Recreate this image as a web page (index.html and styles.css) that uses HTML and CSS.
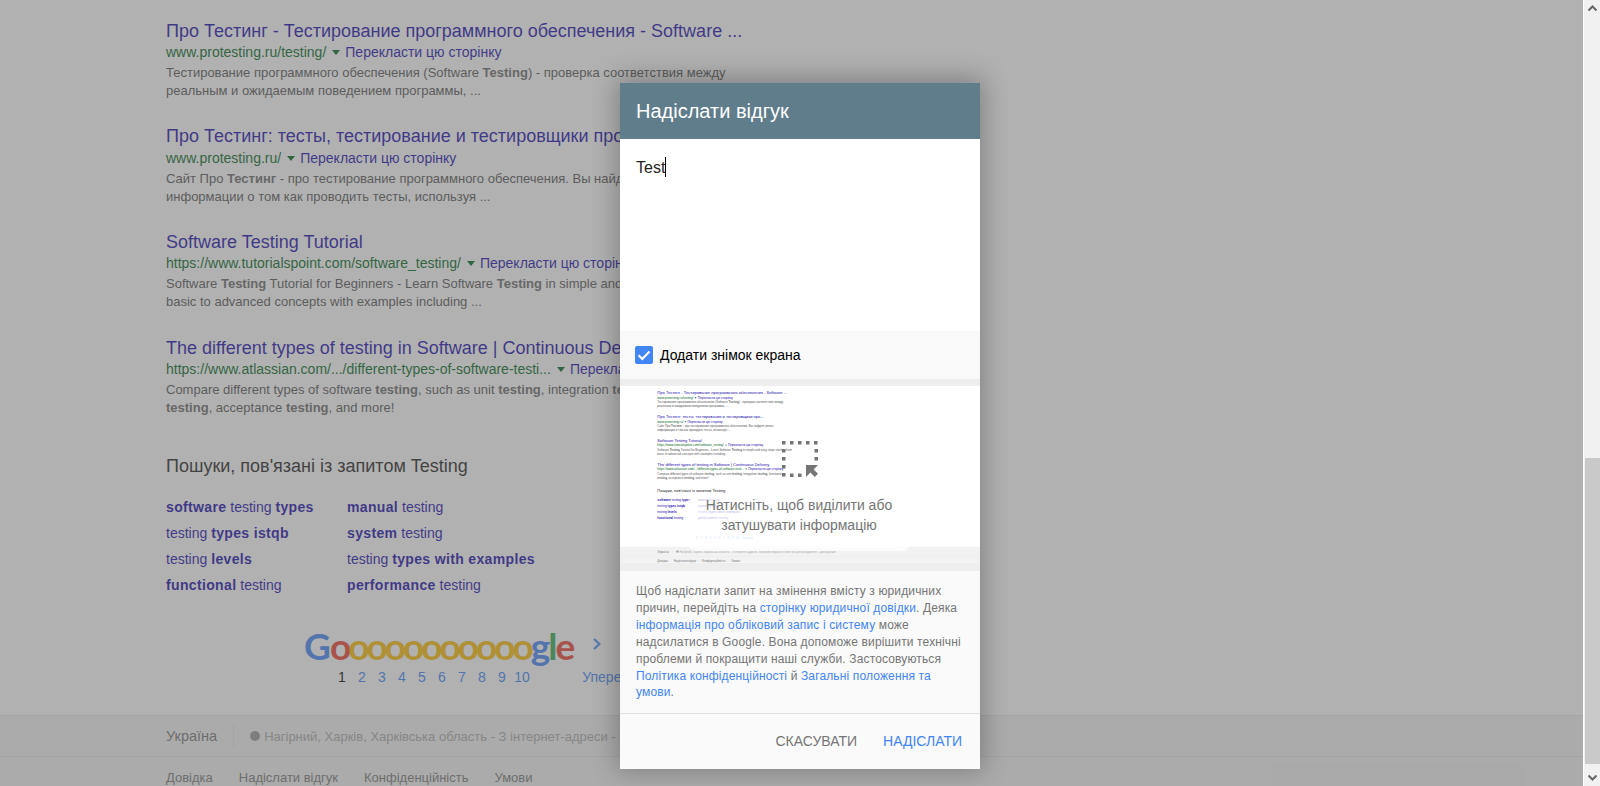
FILE: index.html
```html
<!DOCTYPE html>
<html lang="uk">
<head>
    <meta charset="UTF-8">
    <title>Testing - Пошук Google</title>
    <link rel="stylesheet" href="styles.css">
</head>
<body>
<div class="window">
    <div class="viewport">
        <div class="page">
            <div class="result r1">
                <a class="r-title">Про Тестинг - Тестирование программного обеспечения - Software ...</a>
                <div class="r-url"><span class="green">www.protesting.ru/testing/</span><i class="arrow"></i><a>Перекласти цю сторінку</a></div>
                <p class="r-text">Тестирование программного обеспечения (Software <b>Testing</b>) - проверка соответствия между<br>реальным и ожидаемым поведением программы, ...</p>
            </div>
            <div class="result r2">
                <a class="r-title">Про Тестинг: тесты, тестирование и тестировщики про...</a>
                <div class="r-url"><span class="green">www.protesting.ru/</span><i class="arrow"></i><a>Перекласти цю сторінку</a></div>
                <p class="r-text">Сайт Про <b>Тестинг</b> - про тестирование программного обеспечения. Вы найдете много<br>информации о том как проводить тесты, используя ...</p>
            </div>
            <div class="result">
                <a class="r-title">Software Testing Tutorial</a>
                <div class="r-url"><span class="green">https://www.tutorialspoint.com/software_testing/</span><i class="arrow"></i><a>Перекласти цю сторінку</a></div>
                <p class="r-text">Software <b>Testing</b> Tutorial for Beginners - Learn Software <b>Testing</b> in simple and easy steps starting from<br>basic to advanced concepts with examples including ...</p>
            </div>
            <div class="result">
                <a class="r-title">The different types of testing in Software | Continuous Delivery</a>
                <div class="r-url"><span class="green">https://www.atlassian.com/.../different-types-of-software-testi...</span><i class="arrow"></i><a>Перекласти цю сторінку</a></div>
                <p class="r-text">Compare different types of software <b>testing</b>, such as unit <b>testing</b>, integration <b>testing</b>, functional<br><b>testing</b>, acceptance <b>testing</b>, and more!</p>
            </div>

            <h3 class="related-title">Пошуки, пов'язані із запитом Testing</h3>
            <div class="related">
                <a><b>software</b> testing <b>types</b></a>
                <a><b>manual</b> testing</a>
                <a>testing <b>types istqb</b></a>
                <a><b>system</b> testing</a>
                <a>testing <b>levels</b></a>
                <a>testing <b>types with examples</b></a>
                <a><b>functional</b> testing</a>
                <a><b>performance</b> testing</a>
            </div>

            <div class="pager">
                <div>
                    <div class="logo"><span class="c-blue big-g">G</span><span class="c-red">o</span><span class="c-yel">oooooooooo</span><span class="c-blue small-g">g</span><span class="c-green small-l">l</span><span class="c-red">e</span></div>
                    <div class="pages">
                        <span class="cur">1</span><a>2</a><a>3</a><a>4</a><a>5</a><a>6</a><a>7</a><a>8</a><a>9</a><a>10</a>
                    </div>
                </div>
                <div class="next">
                    <svg class="chev" width="10" height="14" viewBox="0 0 10 14"><path d="M2 2l5.500 5-5.500 5" fill="none" stroke="#4285f4" stroke-width="2"/></svg>
                    <a>Уперед</a>
                </div>
            </div>

            <div class="foot">
                <div class="foot-row1">
                    <span class="country">Україна</span>
                    <span class="dot"></span>
                    <span class="place">Нагірний, Харків, Харківська область - З інтернет-адреси - Використовувати точне місцезнаходження - Докладніше</span>
                </div>
                <div class="foot-row2">
                    <a>Довідка</a><a>Надіслати відгук</a><a>Конфіденційність</a><a>Умови</a>
                </div>
            </div>
        </div>

        <div class="dim"></div>

        <div class="dialog">
            <div class="d-head">Надіслати відгук</div>
            <div class="d-input">Test<span class="caret"></span></div>
            <label class="d-check">
                <span class="box">
                    <svg width="18" height="18" viewBox="0 0 18 18"><path d="M3.600 9.200l3.700 3.700 7.200-7.300" fill="none" stroke="#fff" stroke-width="2.200"/></svg>
                </span>
                Додати знімок екрана
            </label>
            <div class="d-shot">
                <div class="thumb">
                    <div class="page mini">
                        <div class="result r1">
                            <a class="r-title">Про Тестинг - Тестирование программного обеспечения - Software ...</a>
                            <div class="r-url"><span class="green">www.protesting.ru/testing/</span><i class="arrow"></i><a>Перекласти цю сторінку</a></div>
                            <p class="r-text">Тестирование программного обеспечения (Software <b>Testing</b>) - проверка соответствия между<br>реальным и ожидаемым поведением программы, ...</p>
                        </div>
                        <div class="result r2">
                            <a class="r-title">Про Тестинг: тесты, тестирование и тестировщики про...</a>
                            <div class="r-url"><span class="green">www.protesting.ru/</span><i class="arrow"></i><a>Перекласти цю сторінку</a></div>
                            <p class="r-text">Сайт Про <b>Тестинг</b> - про тестирование программного обеспечения. Вы найдете много<br>информации о том как проводить тесты, используя ...</p>
                        </div>
                        <div class="result">
                            <a class="r-title">Software Testing Tutorial</a>
                            <div class="r-url"><span class="green">https://www.tutorialspoint.com/software_testing/</span><i class="arrow"></i><a>Перекласти цю сторінку</a></div>
                            <p class="r-text">Software <b>Testing</b> Tutorial for Beginners - Learn Software <b>Testing</b> in simple and easy steps starting from<br>basic to advanced concepts with examples including ...</p>
                        </div>
                        <div class="result">
                            <a class="r-title">The different types of testing in Software | Continuous Delivery</a>
                            <div class="r-url"><span class="green">https://www.atlassian.com/.../different-types-of-software-testi...</span><i class="arrow"></i><a>Перекласти цю сторінку</a></div>
                            <p class="r-text">Compare different types of software <b>testing</b>, such as unit <b>testing</b>, integration <b>testing</b>, functional<br><b>testing</b>, acceptance <b>testing</b>, and more!</p>
                        </div>
                        <h3 class="related-title">Пошуки, пов'язані із запитом Testing</h3>
                        <div class="related">
                            <a><b>software</b> testing <b>types</b></a>
                            <a><b>manual</b> testing</a>
                            <a>testing <b>types istqb</b></a>
                            <a><b>system</b> testing</a>
                            <a>testing <b>levels</b></a>
                            <a>testing <b>types with examples</b></a>
                            <a><b>functional</b> testing</a>
                            <a><b>performance</b> testing</a>
                        </div>
                        <div class="pager">
                            <div>
                                <div class="logo"></div>
                                <div class="pages">
                                    <span class="cur">1</span><a>2</a><a>3</a><a>4</a><a>5</a><a>6</a><a>7</a><a>8</a><a>9</a><a>10</a>
                                </div>
                            </div>
                            <div class="next"><span class="chev-gap"></span><a>Уперед</a></div>
                        </div>
                        <div class="foot">
                            <div class="foot-row1">
                                <span class="country">Україна</span>
                                <span class="dot"></span>
                                <span class="place">Нагірний, Харків, Харківська область - З інтернет-адреси - Використовувати точне місцезнаходження - Докладніше</span>
                            </div>
                            <div class="foot-row2">
                                <a>Довідка</a><a>Надіслати відгук</a><a>Конфіденційність</a><a>Умови</a>
                            </div>
                        </div>
                    </div>
                </div>
                <svg class="sel-icon" width="36" height="36" viewBox="0 0 36 36">
                    <path d="M0 1.750H36M1.750 8V36M34.250 8V24M8 34.250H24" fill="none" stroke="#757575" stroke-width="3.500" stroke-dasharray="3.500 4.500"/>
                    <path d="M24 24h12l-4.400 4.400L36 32.800 32.800 36l-4.400-4.400L24 36z" fill="#757575"/>
                </svg>
                <div class="bubble">Натисніть, щоб виділити або<br>затушувати інформацію</div>
            </div>
            <div class="d-legal">Щоб надіслати запит на змінення вмісту з юридичних причин, перейдіть на <a>сторінку юридичної довідки</a>. Деяка <a>інформація про обліковий запис і систему</a> може надсилатися в Google. Вона допоможе вирішити технічні проблеми й покращити наші служби. Застосовуються <a>Політика конфіденційності</a> й <a>Загальні положення та умови</a>.</div>
            <div class="d-btns">
                <span class="btn">Скасувати</span>
                <span class="btn send">Надіслати</span>
            </div>
        </div>
    </div>

    <div class="scrollbar">
        <svg width="15" height="17" viewBox="0 0 15 17"><path d="M3.500 10.500l4-4 4 4" fill="none" stroke="#666" stroke-width="2"/></svg>
        <div class="track"><div class="handle"></div></div>
        <svg width="15" height="17" viewBox="0 0 15 17"><path d="M3.500 6.500l4 4 4-4" fill="none" stroke="#666" stroke-width="2"/></svg>
    </div>
</div>
</body>
</html>
```

FILE: styles.css
```css
html, body {
    margin: 0;
    padding: 0;
    height: 100%;
    overflow: hidden;
}
body {
    font-family: "Liberation Sans", Arial, sans-serif;
    background: #fff;
}
a { cursor: pointer; }

.window {
    display: flex;
    height: 786px;
}
.viewport {
    position: relative;
    flex: 1;
    overflow: hidden;
}

/* results page */
.page {
    height: 786px;
    box-sizing: border-box;
    padding-top: 20px;
    overflow: hidden;
}
.result {
    margin: 0 0 26px 166px;
}
.r1 { margin-bottom: 25px; }
.r2 { margin-bottom: 25px; }
.r2 .r-url { margin-top: 1px; }
.r-title {
    display: block;
    font-size: 18px;
    line-height: 22px;
    color: #1a0dab;
    white-space: nowrap;
}
.r-url {
    display: flex;
    align-items: center;
    font-size: 14px;
    line-height: 20px;
    color: #1a0dab;
    white-space: nowrap;
}
.green { color: #006621; }
.arrow {
    flex: none;
    width: 0;
    height: 0;
    margin: 1px 5px 0 6px;
    border-top: 5px solid #006621;
    border-left: 4px solid transparent;
    border-right: 4px solid transparent;
}
.r-text {
    margin: 2px 0 0 0;
    font-size: 13px;
    line-height: 18px;
    color: #545454;
    white-space: nowrap;
}
.r-text b { color: #6a6a6a; }

.related-title {
    margin: 38px 0 17px 166px;
    font-size: 18px;
    line-height: 22px;
    font-weight: normal;
    color: #222;
}
.related {
    display: grid;
    grid-template-columns: 181px auto;
    justify-content: start;
    margin-left: 166px;
    font-size: 14px;
    line-height: 26px;
    color: #1a0dab;
}
.related b { letter-spacing: .35px; }

/* gooogle pager */
.pager {
    display: flex;
    gap: 10px;
    margin: 25px 0 0 304px;
    height: 92px;
}
.logo {
    height: 44px;
    font-family: Lato, sans-serif;
    font-size: 37px;
    line-height: 46px;
    font-weight: bold;
    letter-spacing: -3px;
    white-space: nowrap;
}
.big-g { letter-spacing: -1px; }
.small-g, .small-l { letter-spacing: -2px; }
.c-blue { color: #4285f4; }
.c-red { color: #ea4335; }
.c-yel { color: #fbbc05; }
.c-green { color: #34a853; }
.pages {
    display: flex;
    margin-left: 28px;
    font-size: 14px;
    line-height: 20px;
    color: #4285f4;
}
.pages a, .pages span {
    width: 20px;
    text-align: center;
}
.cur { color: #000; }
.next {
    font-size: 14px;
    color: #4285f4;
}
.chev {
    display: block;
    margin: 14px 0 16px 10px;
}
.chev-gap {
    display: block;
    height: 44px;
}
.next a { line-height: 20px; }

/* footer */
.foot {
    background: #f2f2f2;
    font-size: 13px;
    color: #777;
}
.foot-row1 {
    display: flex;
    align-items: center;
    height: 42px;
    padding-left: 166px;
    border-top: 1px solid #e4e4e4;
    border-bottom: 1px solid #e4e4e4;
    box-sizing: border-box;
    white-space: nowrap;
}
.country {
    font-size: 14.500px;
    padding-right: 16px;
    line-height: 24px;
    border-right: 1px solid #e4e4e4;
}
.dot {
    width: 10px;
    height: 10px;
    margin: 0 4px 0 16px;
    border-radius: 50%;
    background: #999;
}
.place { color: #aaa; }
.foot-row2 {
    display: flex;
    gap: 26px;
    padding: 11px 0 0 166px;
    line-height: 20px;
}

/* grey layer over the page */
.dim {
    position: absolute;
    inset: 0;
    background: rgba(99, 99, 99, .5);
}

/* feedback dialog */
.dialog {
    position: absolute;
    left: 620px;
    top: 83px;
    width: 360px;
    height: 686px;
    display: flex;
    flex-direction: column;
    background: #fafafa;
    box-shadow: 0 -2px 24px 3px rgba(0, 0, 0, .28);
}
.d-head {
    height: 56px;
    padding-left: 16px;
    background: #607d8b;
    color: #fff;
    font-size: 20px;
    line-height: 56px;
}
.d-input {
    height: 192px;
    box-sizing: border-box;
    padding: 18px 16px;
    background: #fff;
    font-size: 16px;
    line-height: 20px;
    color: #222;
}
.caret {
    display: inline-block;
    width: 1px;
    height: 20px;
    margin-bottom: -4px;
    background: #000;
}
.d-check {
    display: flex;
    align-items: center;
    gap: 7px;
    height: 48px;
    padding-left: 15px;
    background: #f9f9f9;
    font-size: 14px;
    color: #000;
}
.box {
    width: 18px;
    height: 18px;
    border-radius: 2px;
    background: #4285f4;
}
.box svg { display: block; }
.d-shot {
    position: relative;
    padding: 7px 0 8px;
    background: #eee;
}
.thumb {
    width: 360px;
    height: 177px;
    overflow: hidden;
    background: #fff;
}
.mini {
    width: 1600px;
    transform: scale(.225);
    transform-origin: 0 0;
}
.sel-icon {
    position: absolute;
    left: 162px;
    top: 62px;
}
.bubble {
    position: absolute;
    left: 68px;
    top: 116px;
    width: 222px;
    height: 56px;
    border-radius: 8px;
    background: rgba(255, 255, 255, .75);
    font-size: 14px;
    line-height: 20px;
    color: #757575;
    text-align: center;
    white-space: nowrap;
}
.d-legal {
    padding: 12px 16px 0;
    height: 143px;
    box-sizing: border-box;
    border-bottom: 1px solid #e0e0e0;
    font-size: 12px;
    line-height: 16.900px;
    letter-spacing: .14px;
    color: #757575;
}
.d-legal a { color: #4285f4; }
.d-btns {
    display: flex;
    justify-content: flex-end;
    gap: 26px;
    padding: 19px 18px 0 0;
    font-size: 14px;
    line-height: 16px;
    text-transform: uppercase;
}
.btn { color: #757575; }
.send { color: #4285f4; }

/* scroll bar */
.scrollbar {
    width: 16px;
    margin-left: 1px;
    display: flex;
    flex-direction: column;
    align-items: center;
    background: #f1f1f1;
}
.scrollbar svg { flex: none; }
.track {
    flex: 1;
    width: 100%;
    padding-top: 441px;
    box-sizing: border-box;
}
.handle {
    width: 15px;
    margin: 0 auto;
    height: 306px;
    background: #c9c9c9;
}
```
